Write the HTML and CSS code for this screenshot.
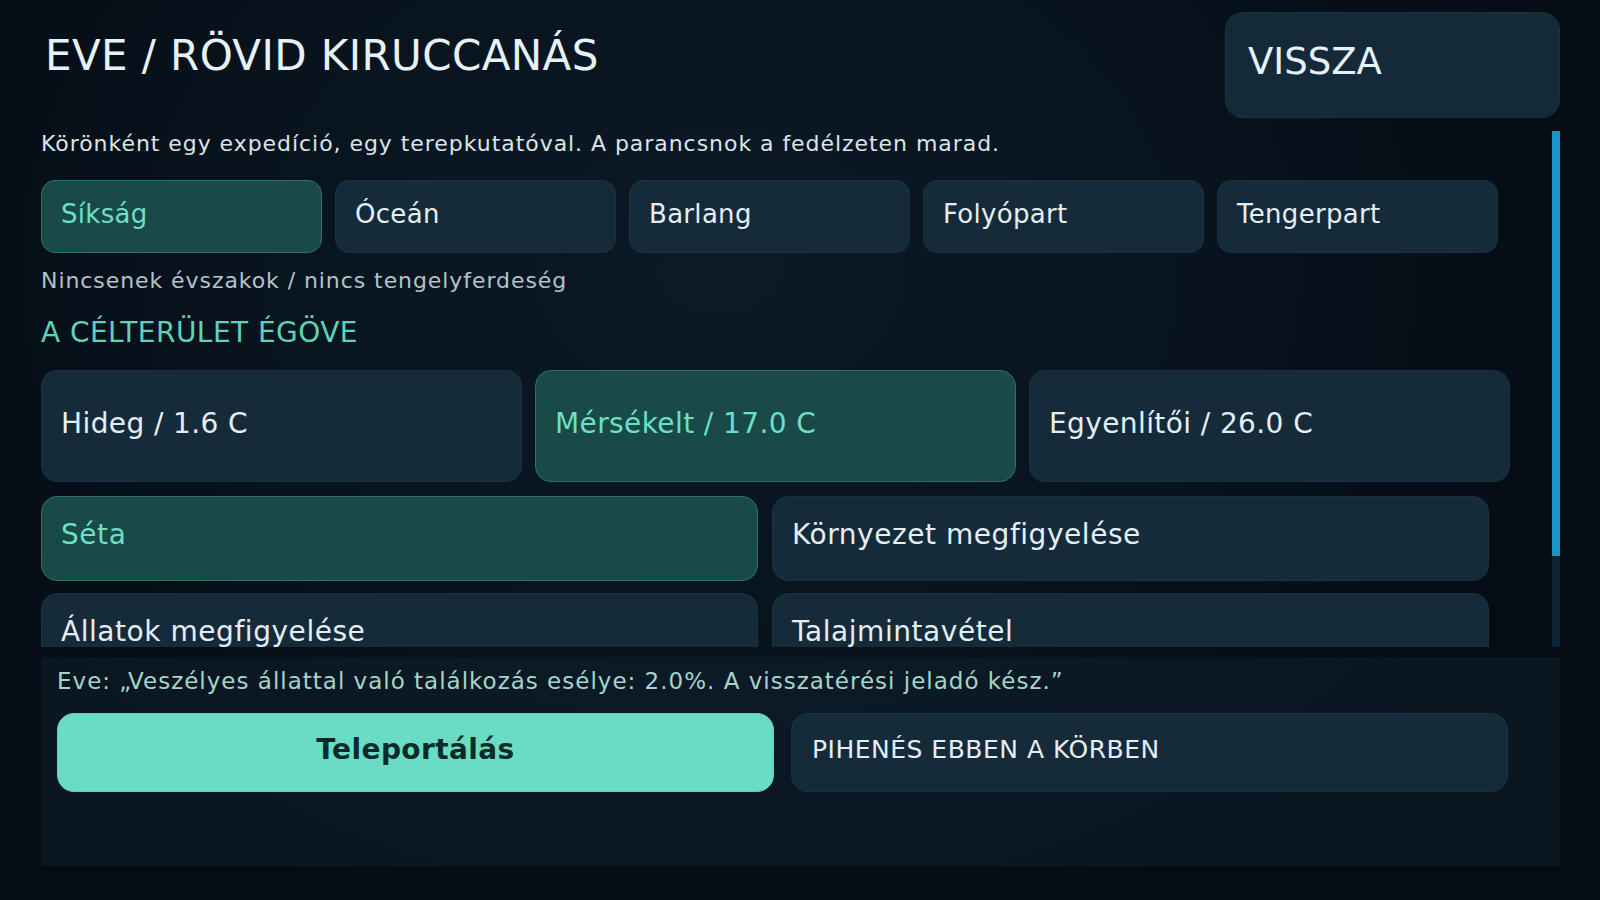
FILE: index.html
```html
<!DOCTYPE html>
<html lang="hu">
<head>
<meta charset="utf-8">
<title>Eve / Rövid kiruccanás</title>
<link rel="stylesheet" href="styles.css">
</head>
<body>
<div class="screen">
  <header class="header">
    <h1 class="title">EVE / RÖVID KIRUCCANÁS</h1>
    <button class="back">VISSZA</button>
  </header>

  <div class="scroll-wrap">
    <div class="scroll">
      <p class="intro">Körönként egy expedíció, egy terepkutatóval. A parancsnok a fedélzeten marad.</p>
      <div class="tabs">
        <button class="tab selected">Síkság</button>
        <button class="tab">Óceán</button>
        <button class="tab">Barlang</button>
        <button class="tab">Folyópart</button>
        <button class="tab">Tengerpart</button>
      </div>
      <p class="note">Nincsenek évszakok / nincs tengelyferdeség</p>
      <h2 class="section">A CÉLTERÜLET ÉGÖVE</h2>
      <div class="zones">
        <button class="zone">Hideg / 1.6 C</button>
        <button class="zone selected">Mérsékelt / 17.0 C</button>
        <button class="zone">Egyenlítői / 26.0 C</button>
      </div>
      <div class="activities">
        <button class="activity selected">Séta</button>
        <button class="activity">Környezet megfigyelése</button>
        <button class="activity">Állatok megfigyelése</button>
        <button class="activity">Talajmintavétel</button>
      </div>
    </div>
    <div class="scrollbar"><div class="thumb"></div></div>
  </div>

  <section class="panel">
    <p class="quote">Eve: „Veszélyes állattal való találkozás esélye: 2.0%. A visszatérési jeladó kész.”</p>
    <div class="actions">
      <button class="primary">Teleportálás</button>
      <button class="secondary">PIHENÉS EBBEN A KÖRBEN</button>
    </div>
  </section>
</div>
</body>
</html>
```

FILE: styles.css
```css
* { box-sizing: border-box; }

html, body {
  margin: 0;
  padding: 0;
  width: 1600px;
  height: 900px;
  overflow: hidden;
}

body {
  font-family: "DejaVu Sans", "Noto Sans", sans-serif;
  color: #e4eef4;
  background:
    radial-gradient(ellipse 900px 700px at 45% 30%, #0c1a27 0%, #08131d 55%, #050c14 100%);
}

button {
  font-family: inherit;
  cursor: pointer;
}

.screen {
  width: 1600px;
  height: 900px;
  padding: 12px 40px 0 41px;
  display: flex;
  flex-direction: column;
}

/* header */
.header {
  display: flex;
  justify-content: space-between;
  align-items: flex-start;
  height: 119px;
}

.title {
  margin: 19px 0 0 4px;
  font-size: 42px;
  line-height: 50px;
  font-weight: normal;
  color: #e6f2f8;
  letter-spacing: 0.4px;
}

.back {
  width: 335px;
  height: 106px;
  border: 1px solid #1a3242;
  border-radius: 18px;
  background: #152a38;
  color: #e6f2f8;
  font-size: 37px;
  line-height: 38px;
  text-align: left;
  padding: 0 0 6px 22px;
  display: block;
  align-self: flex-start;
}

/* scroll region */
.scroll-wrap {
  display: flex;
  height: 516px;
}

.scroll {
  flex: 1;
  overflow: hidden;
}

.scrollbar {
  width: 8px;
  background: #0b2535;
  border-radius: 1px;
  display: flex;
  flex-direction: column;
}

.thumb {
  height: 425px;
  background: #1896cc;
}

.intro {
  margin: 0;
  font-size: 22px;
  line-height: 26px;
  letter-spacing: 0.95px;
  color: #dae4ea;
}

.tabs {
  margin-top: 23px;
  display: grid;
  grid-template-columns: repeat(5, 281px);
  column-gap: 13px;
}

.tab, .zone, .activity {
  border: 1px solid #1a3243;
  background: #162b3a;
  color: #e4eef4;
  text-align: left;
  display: flex;
  align-items: center;
  padding: 0 0 0 19px;
}

.tab {
  height: 73px;
  border-radius: 14px;
  font-size: 26px;
  letter-spacing: 0.3px;
  padding-bottom: 5px;
}

.selected {
  background: #194a47;
  border-color: #2d7167;
  color: #6ddfc7;
}

.note {
  margin: 15px 0 0 0;
  font-size: 22px;
  line-height: 26px;
  letter-spacing: 0.93px;
  color: #b3c3cc;
}

.section {
  margin: 22px 0 0 0;
  font-size: 28px;
  line-height: 34px;
  font-weight: normal;
  letter-spacing: 0.45px;
  color: #5fd2ba;
}

.zones {
  margin-top: 20px;
  display: grid;
  grid-template-columns: repeat(3, 481px);
  column-gap: 13px;
}

.zone {
  height: 112px;
  border-radius: 16px;
  font-size: 28px;
  letter-spacing: 0.4px;
  padding-bottom: 6px;
}

.activities {
  margin-top: 14px;
  display: grid;
  grid-template-columns: repeat(2, 717px);
  column-gap: 14px;
  row-gap: 12px;
}

.activity {
  height: 85px;
  border-radius: 16px;
  font-size: 28px;
  letter-spacing: 0.55px;
  padding-bottom: 8px;
}

/* bottom panel */
.panel {
  margin-top: 10px;
  width: 1519px;
  height: 209px;
  background: rgba(22, 44, 60, 0.32);
  padding: 11px 0 0 16px;
}

.quote {
  margin: 0;
  font-size: 23px;
  line-height: 27px;
  color: #a5d5cb;
  letter-spacing: 1px;
}

.actions {
  margin-top: 18px;
  display: grid;
  grid-template-columns: repeat(2, 717px);
  column-gap: 17px;
}

.primary, .secondary {
  height: 79px;
  border-radius: 17px;
}

.primary {
  border: 1px solid #5fcfb8;
  background: #6adcc5;
  color: #0a2b2a;
  font-size: 28px;
  font-weight: bold;
  letter-spacing: 0.4px;
  padding-bottom: 8px;
}

.secondary {
  border: 1px solid #1a3243;
  background: #162b3a;
  color: #e4eef4;
  font-size: 25px;
  letter-spacing: 0.5px;
  text-align: left;
  padding: 0 0 7px 20px;
}
```
